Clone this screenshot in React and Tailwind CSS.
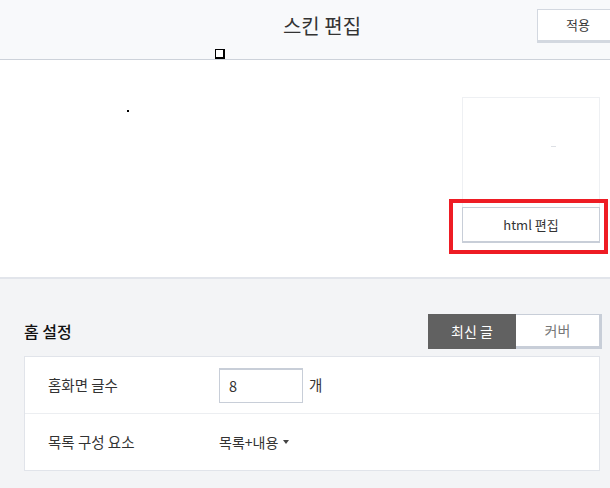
import React from 'react';

const font = { fontFamily: '"Noto Sans CJK KR", "Noto Sans", sans-serif' };

function Header() {
	return (
		<div className="relative flex h-[60px] items-start border-b border-[#cdd2da] bg-[#f8f9fb]">
			<div className="flex flex-1 justify-center pl-[107px] pt-[13px]">
				<span className="text-[20px] leading-[26px] text-[#333]">스킨 편집</span>
			</div>
			<button className="mr-[-9px] mt-[9px] h-[34px] w-[82px] border border-b-[3px] border-[#d3d8e0] bg-white text-[13px] text-[#333]">
				적용
			</button>
			{/* resize handle */}
			<div className="absolute left-[215px] top-[49px] h-[10px] w-[10px] border border-b-2 border-r-2 border-black bg-white" />
		</div>
	);
}

function Preview() {
	return (
		<div className="relative flex h-[217px] justify-end bg-white pr-[10px] pt-[37px]">
			<div className="absolute left-[127px] top-[50px] h-[2px] w-[2px] bg-black" />
			<div className="flex w-[138px] flex-col">
				<div className="relative h-[110px] border-l border-r border-t border-[#eef0f3]">
					<div className="absolute left-[88px] top-[48px] h-px w-[5px] bg-[#dde0e5]" />
				</div>
				<div className="relative">
					<button className="flex h-[36px] w-full items-center justify-center border border-b-2 border-[#c8ced8] bg-white text-[13px] text-[#333]">
						html 편집
					</button>
					<div className="pointer-events-none absolute -bottom-[11px] -left-[13px] -right-[8px] -top-[8px] border-4 border-[#ee1c24]" />
				</div>
			</div>
		</div>
	);
}

function HomeSettings() {
	return (
		<div className="border-t-2 border-[#e2e5eb] bg-[#f3f4f6] pb-[16px] pl-[24px] pr-[10px] pt-[35px]">
			<div className="flex items-start justify-between">
				<span className="mt-[6px] text-[16px] font-medium leading-[22px] text-[#111]">홈 설정</span>
				<div className="mr-[-2px] flex h-[35px]">
					<div className="flex w-[88px] items-center justify-center bg-[#616161] text-[14px] text-white">
						최신 글
					</div>
					<div className="flex w-[86px] items-center justify-center border-b-[3px] border-r-[3px] border-t border-[#c8ced8] bg-white text-[14px] text-[#777]">
						커버
					</div>
				</div>
			</div>
			<div className="mt-[7px] border border-[#e1e4ea] bg-white">
				<div className="flex h-[57px] items-center border-b border-[#eceef1]">
					<span className="w-[194px] pl-[23px] text-[14.5px] text-[#333]">홈화면 글수</span>
					<div className="flex h-[35px] w-[84px] items-center border border-t-2 border-[#c8ced8] pl-[9px] text-[14.5px] text-[#333]">
						8
					</div>
					<span className="ml-[6px] text-[14.5px] text-[#333]">개</span>
				</div>
				<div className="flex h-[56px] items-center">
					<span className="w-[194px] pl-[23px] text-[14.5px] text-[#333]">목록 구성 요소</span>
					<span className="text-[14px] text-[#333]">목록+내용</span>
					<svg className="ml-[5px]" width="6" height="4" viewBox="0 0 6 4">
						<path d="M0 0h6L3 4z" fill="#444" />
					</svg>
				</div>
			</div>
		</div>
	);
}

export default function App() {
	return (
		<div className="h-[488px] w-[610px] overflow-hidden bg-[#f3f4f6]" style={font}>
			<Header />
			<Preview />
			<HomeSettings />
		</div>
	);
}
